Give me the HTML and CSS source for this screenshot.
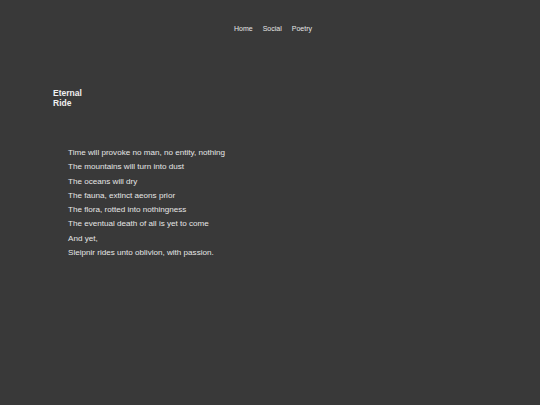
FILE: index.html
```html
<!DOCTYPE html>
<html>
<head>
<meta charset="utf-8">
<link rel="stylesheet" href="styles.css">
</head>
<body>
<nav class="nav">
  <a href="#">Home</a>
  <a href="#">Social</a>
  <a href="#">Poetry</a>
</nav>
<main class="main">
  <h1 class="title">Eternal<br>Ride</h1>
  <div class="poem">
    <p>Time will provoke no man, no entity, nothing</p>
    <p>The mountains will turn into dust</p>
    <p>The oceans will dry</p>
    <p>The fauna, extinct aeons prior</p>
    <p>The flora, rotted into nothingness</p>
    <p>The eventual death of all is yet to come</p>
    <p>And yet,</p>
    <p>Sleipnir rides unto oblivion, with passion.</p>
  </div>
</main>
</body>
</html>
```
FILE: styles.css
```css
html, body {
  margin: 0;
  padding: 0;
  background: #393939;
  height: 100%;
}
body {
  font-family: "Liberation Sans", Arial, sans-serif;
  color: #e6e6e6;
}
.nav {
  display: flex;
  justify-content: center;
  gap: 10px;
  padding-top: 25px;
  padding-left: 6px;
  font-size: 7px;
  line-height: 8px;
}
.nav a {
  color: #e6e6e6;
  text-decoration: none;
}
.main {
  padding-left: 53px;
  padding-top: 55px;
}
.title {
  margin: 0;
  font-size: 8.5px;
  line-height: 10px;
  font-weight: bold;
  color: #f0f0f0;
}
.poem {
  margin-top: 38px;
  padding-left: 15px;
  font-size: 8.1px;
  line-height: 14.3px;
}
.poem p {
  margin: 0;
}
```
